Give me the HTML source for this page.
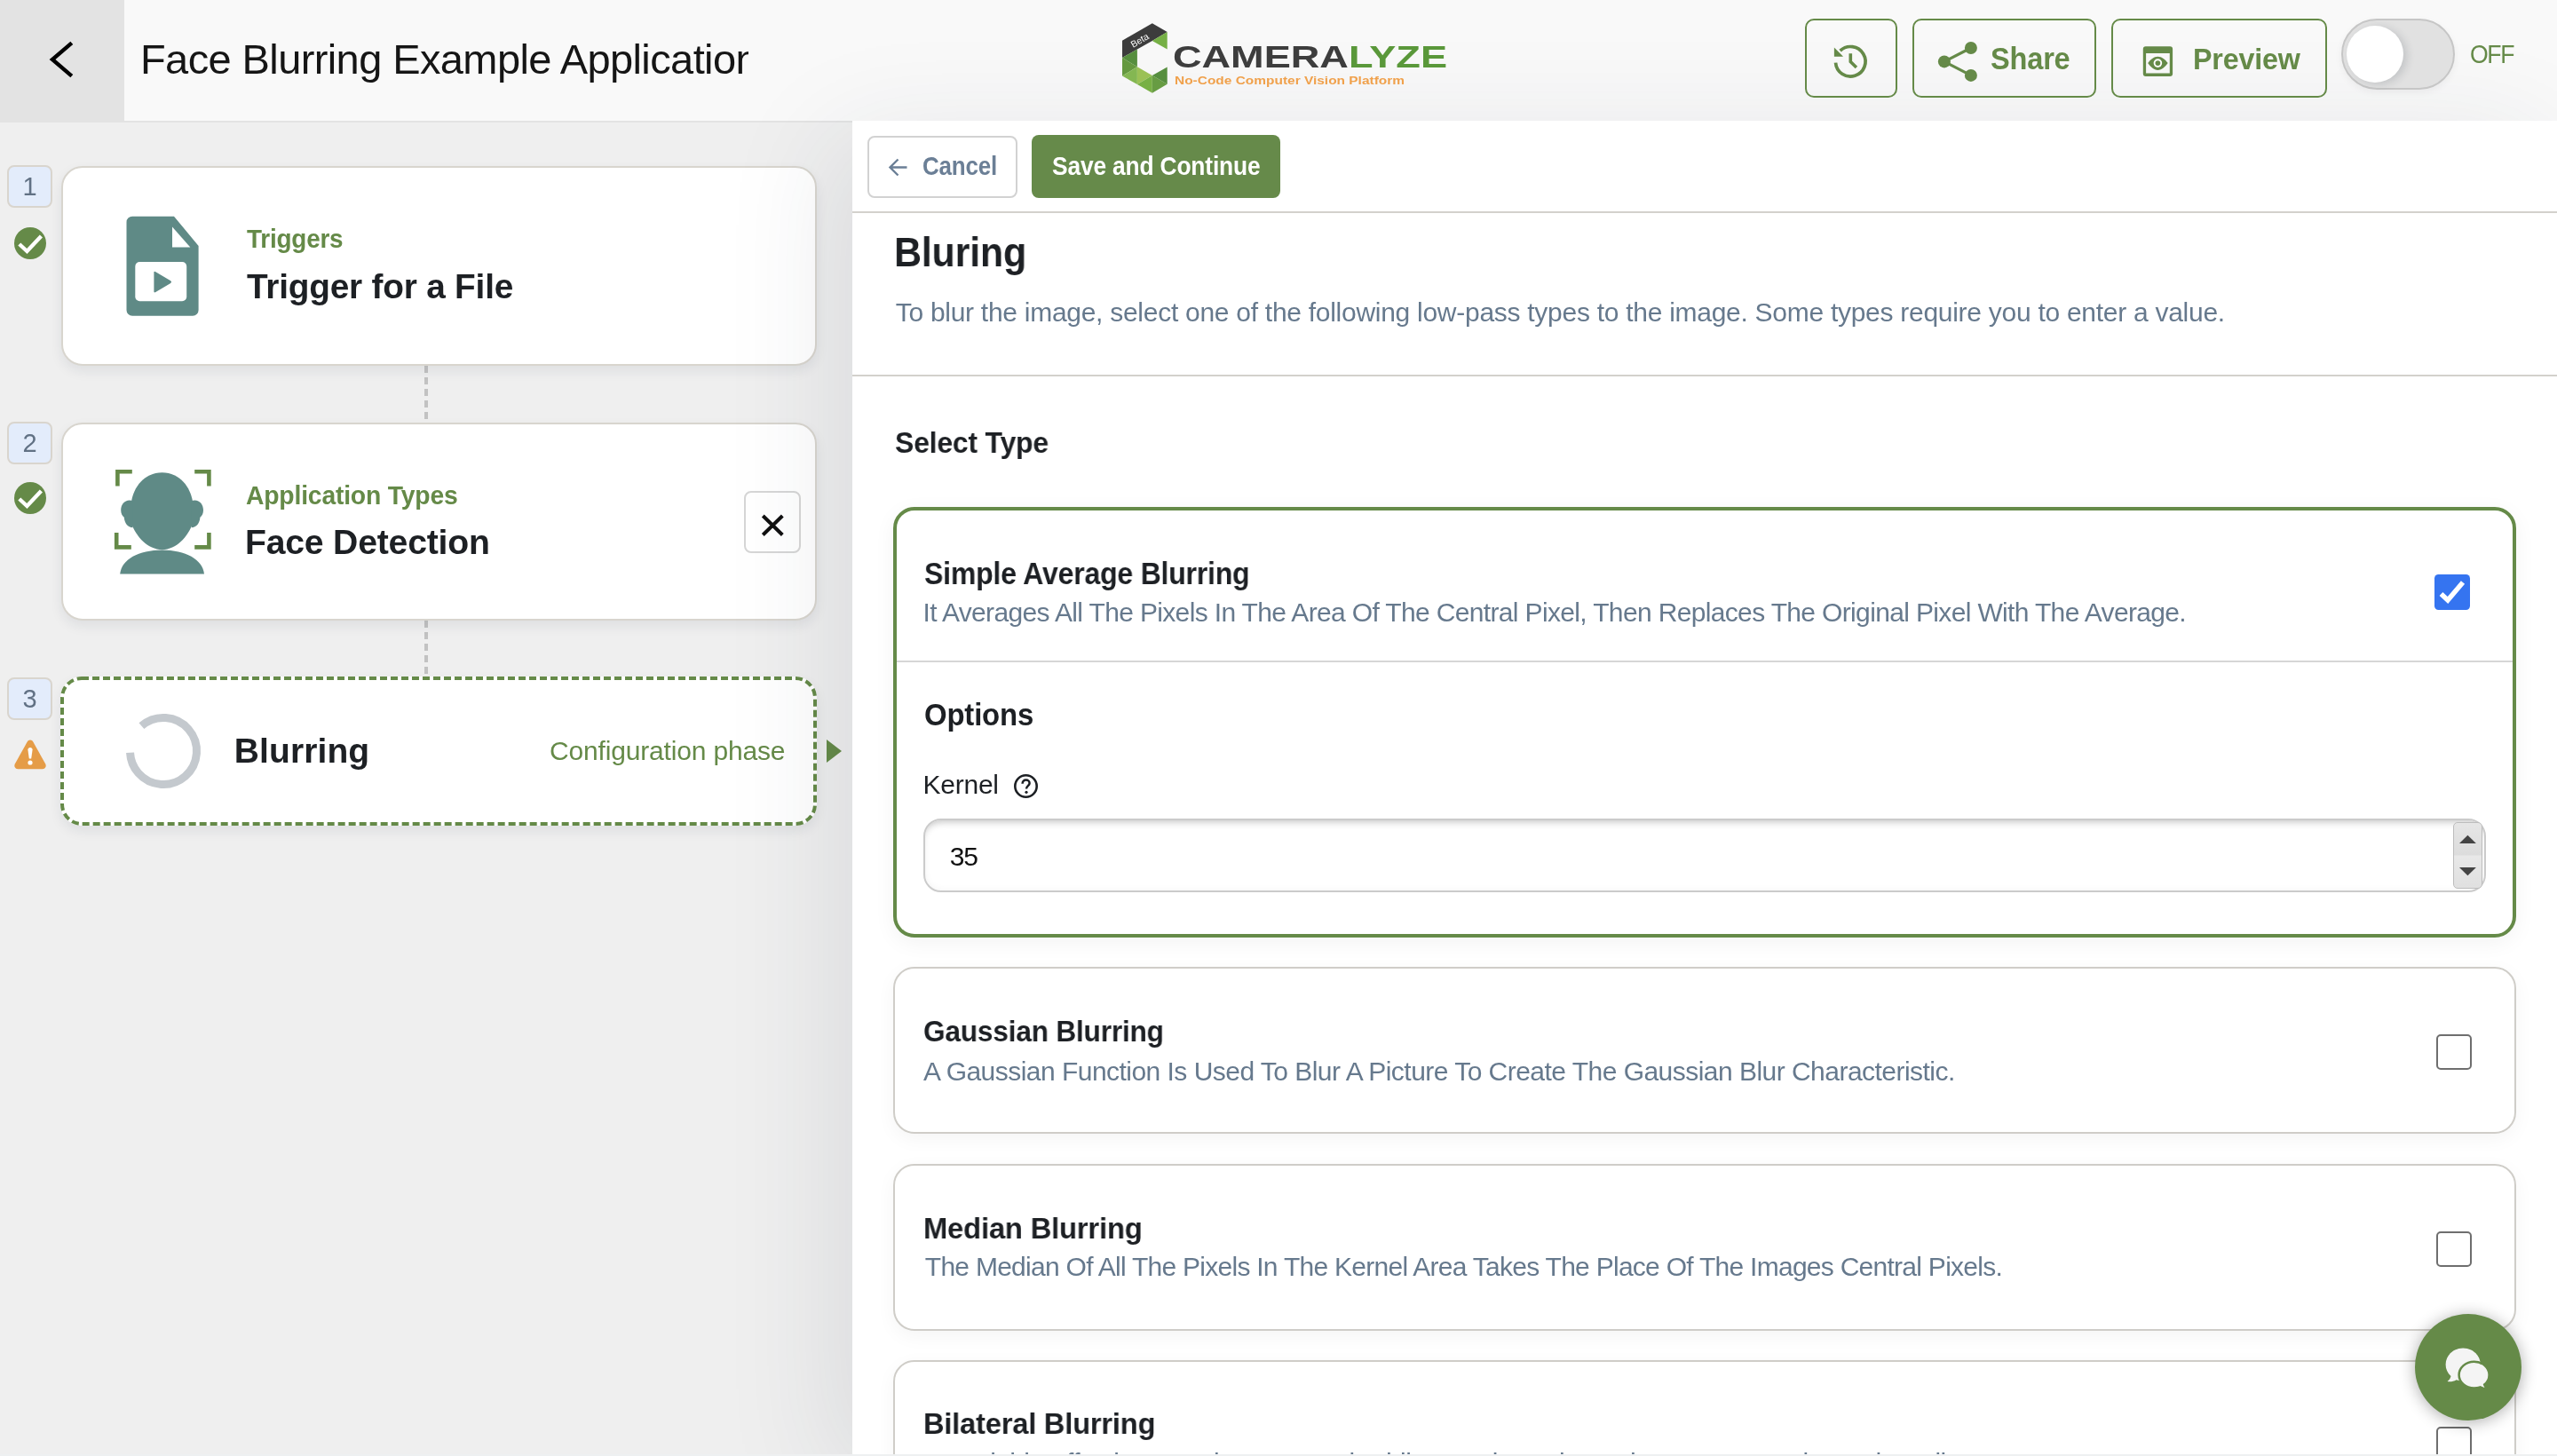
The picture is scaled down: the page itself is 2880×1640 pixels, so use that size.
<!DOCTYPE html>
<html>
<head>
<meta charset="utf-8">
<style>
html,body{margin:0;padding:0;}
@media (max-width:2000px){html{zoom:0.5;}}
body{will-change:transform;width:2880px;height:1640px;overflow:hidden;position:relative;background:#fff;font-family:"Liberation Sans",sans-serif;color:#1d2024;}
.a{position:absolute;}
.t{position:absolute;white-space:nowrap;line-height:1;}
.b{font-weight:bold;}
svg{position:absolute;overflow:visible;}
/* header */
#hdr{left:0;top:0;width:2880px;height:136px;background:#f9f9f9;}
#back{left:0;top:0;width:140px;height:137px;background:#e3e3e3;}
.hbtn{position:absolute;top:21px;height:89px;box-sizing:border-box;border:2px solid #658a48;border-radius:10px;}
/* sidebar */
#side{left:0;top:136px;width:960px;height:1504px;box-sizing:border-box;border-top:2px solid #e3e3e3;background:#efefef;}
.num{position:absolute;left:8px;width:51px;height:48px;box-sizing:border-box;border:2px solid #d9d5ce;border-radius:8px;background:#e3ecfb;color:#617184;font-size:29px;text-align:center;line-height:44px;}
.card{position:absolute;left:69px;width:851px;box-sizing:border-box;background:#fff;border:2px solid #d8d5ce;border-radius:24px;box-shadow:0 6px 14px rgba(30,40,60,0.08);}
.conn{position:absolute;left:478px;width:4px;background:repeating-linear-gradient(#c2c2c2 0 8px,transparent 8px 13px);}
/* right */
#main{left:960px;top:136px;width:1920px;height:1502px;background:#fff;box-shadow:-20px 22px 120px rgba(40,50,70,0.1);}
.line{position:absolute;height:2px;background:#d3d1cc;}
.ocard{position:absolute;left:1006px;width:1828px;box-sizing:border-box;border:2px solid #cfcdc8;border-radius:24px;background:#fff;box-shadow:0 6px 22px rgba(0,0,0,0.045);}
.cb{position:absolute;left:2744px;width:40px;height:40px;box-sizing:border-box;border:2.5px solid #6e6e6e;border-radius:5px;background:#fff;}
.desc{color:#66798d;font-size:30px;}
</style>
</head>
<body>
<div id="hdr" class="a"></div>
<div id="back" class="a"></div>

<!-- SIDEBAR -->
<div id="side" class="a"></div>
<div class="num" style="top:186px;">1</div>
<div class="num" style="top:475px;">2</div>
<div class="num" style="top:763px;">3</div>
<svg style="left:16px;top:255.5px" width="36" height="36"><circle cx="18" cy="18" r="18" fill="#658a48"/><polyline points="5.8,19 14.4,27 30.4,10" fill="none" stroke="#fff" stroke-width="4.4"/></svg>
<svg style="left:16px;top:543px" width="36" height="36"><circle cx="18" cy="18" r="18" fill="#658a48"/><polyline points="5.8,19 14.4,27 30.4,10" fill="none" stroke="#fff" stroke-width="4.4"/></svg>
<svg style="left:15px;top:832px" width="38" height="36"><path d="M19,1.5 C20.5,1.5 21.6,2.3 22.4,3.7 L36.2,28.6 C37.6,31.2 35.9,34.3 32.9,34.3 L5.1,34.3 C2.1,34.3 0.4,31.2 1.8,28.6 L15.6,3.7 C16.4,2.3 17.5,1.5 19,1.5 Z" fill="#e59c47"/><path d="M16.4,12.6 C16.4,10.9 17.6,10 19,10 C20.4,10 21.6,10.9 21.6,12.6 L20.2,22.6 L17.8,22.6 Z" fill="#fff"/><circle cx="19" cy="27" r="2.6" fill="#fff"/></svg>
<div class="conn" style="top:412px;height:64px;"></div>
<div class="conn" style="top:699px;height:64px;"></div>
<div class="card" style="top:187px;height:225px;"></div>
<svg style="left:142px;top:243px" width="82" height="113" viewBox="0 0 82 113">
  <path d="M7,0.7 L54,0.7 L81.6,34 L81.6,106 A6.5,6.5 0 0 1 75.1,112.7 L7,112.7 A6.5,6.5 0 0 1 0.5,106 L0.5,7.2 A6.5,6.5 0 0 1 7,0.7 Z" fill="#5f8a86"/>
  <polygon points="52,12.4 52,35.4 72.3,35.4" fill="#fff"/>
  <rect x="10.3" y="52" width="57.9" height="44.3" rx="5" fill="#fff"/>
  <path d="M31.4,64.6 Q30.9,62 33.3,63.2 L50.2,73.3 Q52,74.6 50.2,75.9 L33.3,86 Q30.9,87.2 31.4,84.6 Z" fill="#5f8a86"/>
</svg>
<div class="t b" id="t_trig" style="left:277.6px;top:254px;font-size:30px;color:#658a48;letter-spacing:-0.2px;transform:scaleX(0.9284);transform-origin:0 0;">Triggers</div>
<div class="t b" id="t_trigfile" style="left:277.6px;top:303px;font-size:39.5px;color:#1d2024;letter-spacing:-0.2px;transform:scaleX(0.9810);transform-origin:0 0;">Trigger for a File</div>
<div class="card" style="top:476px;height:223px;"></div>
<svg style="left:110px;top:510px" width="150" height="150" viewBox="0 0 150 150">
  <g fill="none" stroke="#658a48" stroke-width="4.6">
    <polyline points="38.8,21.2 22.4,21.2 22.4,37.6"/>
    <polyline points="109.2,21.2 125.4,21.2 125.4,37.6"/>
    <polyline points="21.2,90.1 21.2,106.4 37.8,106.4"/>
    <polyline points="125.4,90.1 125.4,106.4 109.2,106.4"/>
  </g>
  <g fill="#5f8a86">
    <path d="M72.6,22.2 C93,22.2 104.5,39 107,55 L107,80 C101,95 89,108.5 72.6,109.3 C56,108.5 44,95 38,80 L38,55 C40.5,39 52,22.2 72.6,22.2 Z"/>
    <path d="M39.5,54 C31.5,51.5 26.2,57.5 26.2,64.5 C26.2,68.5 27.6,71 29.8,72.8 C30.3,79.5 34,84.2 39.5,84.2 Z"/>
    <path d="M105.7,54 C113.7,51.5 119,57.5 119,64.5 C119,68.5 117.6,71 115.4,72.8 C114.9,79.5 111.2,84.2 105.7,84.2 Z"/>
    <path d="M25.2,136.6 C27,120 46,109.8 72.6,109.6 C99,109.8 118,120 120,136.6 Z"/>
  </g>
</svg>
<div class="t b" id="t_apptypes" style="left:277.0px;top:543px;font-size:30px;color:#658a48;letter-spacing:-0.2px;transform:scaleX(0.9438);transform-origin:0 0;">Application Types</div>
<div class="t b" id="t_facedet" style="left:276.0px;top:591px;font-size:39px;color:#1d2024;letter-spacing:-0.2px;transform:scaleX(1.0037);transform-origin:0 0;">Face Detection</div>
<div class="a" style="left:838px;top:553px;width:64px;height:70px;box-sizing:border-box;border:2px solid #d6d6d6;border-radius:8px;background:#fff;"></div>
<svg style="left:838px;top:553px" width="64" height="70"><path d="M21.3,28 L43.3,49.5 M43.3,28 L21.3,49.5" stroke="#111" stroke-width="4"/></svg>
<div class="a" style="left:68px;top:762px;width:852px;height:168px;border-radius:24px;background:#fff;box-shadow:0 6px 14px rgba(30,40,60,0.08);"></div>
<svg style="left:68px;top:762px" width="852" height="168"><rect x="2" y="2" width="848" height="164" rx="22" ry="22" fill="none" stroke="#658a48" stroke-width="4" stroke-dasharray="8 4"/></svg>
<svg style="left:142px;top:804px" width="84" height="84"><circle cx="42" cy="42" r="37.5" fill="none" stroke="#c4c9ce" stroke-width="9" stroke-dasharray="201.5 300" transform="rotate(229 42 42)"/></svg>
<div class="t b" id="t_blurring" style="left:263.8px;top:826px;font-size:39px;color:#1d2024;letter-spacing:0.1px;">Blurring</div>
<div class="t" id="t_config" style="left:619px;top:831px;font-size:30px;color:#658a48;letter-spacing:-0.17px;">Configuration phase</div>
<svg style="left:930px;top:832px" width="20" height="28"><polygon points="1,1 18,14 1,27" fill="#658a48"/></svg>


<!-- MAIN -->
<div id="main" class="a"></div>
<div class="a" style="left:976.5px;top:152.5px;width:169px;height:70px;box-sizing:border-box;border:2px solid #d2d2d2;border-radius:8px;background:#fff;"></div>
<svg style="left:990px;top:170px" width="40" height="36"><path d="M31.5,18.5 L12.5,18.5 M21.5,9.5 L12.5,18.5 L21.5,27.5" fill="none" stroke="#6b7f96" stroke-width="2.4"/></svg>
<div class="t b" id="t_cancel" style="left:1039.2px;top:172px;font-size:30px;color:#6b7f96;letter-spacing:-0.2px;transform:scaleX(0.8660);transform-origin:0 0;">Cancel</div>
<div class="a" style="left:1162px;top:152px;width:280px;height:71px;border-radius:8px;background:#668a4a;"></div>
<div class="t b" id="t_save" style="left:1185.0px;top:172px;font-size:30px;color:#fff;letter-spacing:-0.2px;transform:scaleX(0.879);transform-origin:0 0;">Save and Continue</div>
<div class="line" style="left:960px;top:238px;width:1920px;"></div>
<div class="t b" id="t_bluring" style="left:1006.8px;top:261px;font-size:46px;color:#1d2024;letter-spacing:-0.2px;transform:scaleX(0.9338);transform-origin:0 0;">Bluring</div>
<div class="t desc" id="t_desc0" style="left:1008.7px;top:337px;letter-spacing:-0.276px;">To blur the image, select one of the following low-pass types to the image. Some types require you to enter a value.</div>
<div class="line" style="left:960px;top:421.5px;width:1920px;"></div>
<div class="t b" id="t_seltype" style="left:1008.0px;top:481.8px;font-size:33.5px;color:#1d2024;letter-spacing:-0.2px;transform:scaleX(0.9528);transform-origin:0 0;">Select Type</div>

<!-- selected card -->
<div class="a" style="left:1006px;top:571px;width:1828px;height:485px;box-sizing:border-box;border:4px solid #658a48;border-radius:24px;background:#fff;box-shadow:0 6px 24px rgba(0,0,0,0.05);"></div>
<div class="t b" id="t_simple" style="left:1041.0px;top:629px;font-size:34.5px;color:#1d2024;letter-spacing:-0.2px;transform:scaleX(0.9267);transform-origin:0 0;">Simple Average Blurring</div>
<div class="t desc" id="t_desc1" style="left:1039.5px;top:675px;letter-spacing:-0.65px;">It Averages All The Pixels In The Area Of The Central Pixel, Then Replaces The Original Pixel With The Average.</div>
<svg style="left:2742px;top:647px" width="40" height="40"><rect x="0" y="0" width="40" height="40" rx="4.5" fill="#3574f0"/><polyline points="7.5,22 15,29 32,9" fill="none" stroke="#fff" stroke-width="5.5"/></svg>
<div class="a" style="left:1010px;top:744px;width:1820px;height:2px;background:#d6d6d6;"></div>
<div class="t b" id="t_options" style="left:1041.0px;top:786.5px;font-size:35px;color:#1d2024;letter-spacing:-0.2px;transform:scaleX(0.9411);transform-origin:0 0;">Options</div>
<div class="t" id="t_kernel" style="left:1039.4px;top:869px;font-size:30px;color:#1d2024;letter-spacing:-0.22px;">Kernel</div>
<svg style="left:1141px;top:871px" width="30" height="30"><circle cx="14.5" cy="14.5" r="12.2" fill="none" stroke="#1d2024" stroke-width="2.6"/><path d="M10.6,11.8 C10.6,9.2 12.4,7.6 14.6,7.6 C16.9,7.6 18.6,9.2 18.6,11.3 C18.6,14 15,14.4 15,17.4" fill="none" stroke="#1d2024" stroke-width="2.5"/><circle cx="15" cy="21.3" r="1.6" fill="#1d2024"/></svg>
<div class="a" style="left:1040px;top:922px;width:1760px;height:83px;box-sizing:border-box;border:2px solid #cbcbcb;border-radius:20px;background:#fff;box-shadow:inset 0 8px 9px -6px rgba(0,0,0,0.2),inset 0 0 9px rgba(0,0,0,0.05);"></div>
<div class="t" id="t_35" style="left:1069.7px;top:950px;font-size:30px;color:#111;letter-spacing:-1px;">35</div>
<div class="a" style="left:2762.5px;top:926px;width:33px;height:75px;box-sizing:border-box;border:1.5px solid #bdbdbd;border-radius:5px;background:linear-gradient(#e6e6e6,#dcdcdc 49%,#e8e8e8 51%,#e0e0e0);"></div>
<svg style="left:2762px;top:926px" width="34" height="75"><polygon points="8,24 17.4,14.8 26.9,24" fill="#444"/><polygon points="8,51.1 26.9,51.1 17.4,60.2" fill="#444"/></svg>

<!-- other cards -->
<div class="ocard" style="top:1089px;height:188px;"></div>
<div class="t b" id="t_gauss" style="left:1040.0px;top:1144px;font-size:34px;color:#1d2024;letter-spacing:-0.2px;transform:scaleX(0.9291);transform-origin:0 0;">Gaussian Blurring</div>
<div class="t desc" id="t_desc2" style="left:1040px;top:1192px;letter-spacing:-0.53px;">A Gaussian Function Is Used To Blur A Picture To Create The Gaussian Blur Characteristic.</div>
<div class="cb" style="top:1165px;"></div>
<div class="ocard" style="top:1310.5px;height:188px;"></div>
<div class="t b" id="t_median" style="left:1039.6px;top:1366px;font-size:34px;color:#1d2024;letter-spacing:-0.2px;transform:scaleX(0.9639);transform-origin:0 0;">Median Blurring</div>
<div class="t desc" id="t_desc3" style="left:1041.8px;top:1412px;letter-spacing:-0.73px;">The Median Of All The Pixels In The Kernel Area Takes The Place Of The Images Central Pixels.</div>
<div class="cb" style="top:1386.5px;"></div>
<div class="ocard" style="top:1532px;height:188px;"></div>
<div class="t b" id="t_bilat" style="left:1039.6px;top:1586px;font-size:34px;color:#1d2024;letter-spacing:-0.2px;transform:scaleX(0.9597);transform-origin:0 0;">Bilateral Blurring</div>
<div class="t desc" id="t_desc4" style="left:1041px;top:1632.5px;letter-spacing:-0.6px;">It Is Highly Effective In Noise Removal While Keeping Edges Sharp Compared To Other Filters.</div>
<div class="cb" style="top:1606.5px;"></div>
<div class="a" style="left:0;top:1638px;width:2880px;height:2px;background:#eef0f1;"></div>
<!-- chat -->
<div class="a" style="left:2720px;top:1480px;width:120px;height:120px;border-radius:50%;background:#658a48;box-shadow:0 2px 18px rgba(0,0,0,0.32);"></div>
<svg style="left:2720px;top:1480px" width="120" height="120">
  <path d="M54.2,38.5 C64.9,38.5 73.8,46.5 73.8,57 C73.8,67.5 64.9,75.5 54.2,75.5 C51.5,75.5 49,75 46.7,74.2 C43.5,76 40,76.6 36.5,76 C38.5,74.5 40,72.5 40.5,70 C36.7,66.6 34.6,62 34.6,57 C34.6,46.5 43.5,38.5 54.2,38.5 Z" fill="#f4f4f4"/>
  <path d="M66.6,53.8 C76,53.8 83.6,60.5 83.6,68.8 C83.6,73.2 81.5,77 78.2,79.6 C78.8,81.6 80.3,83.2 83,84.4 C79.3,84.7 76,83.8 73.6,82.4 C71.4,83.2 69,83.6 66.6,83.6 C57.2,83.6 49.6,77 49.6,68.8 C49.6,60.5 57.2,53.8 66.6,53.8 Z" fill="#f4f4f4" stroke="#658a48" stroke-width="2.5"/>
</svg>

<!-- HEADER -->
<svg style="left:0;top:0" width="140" height="137"><path d="M80.8,48.3 L59,67 L80.8,85.7" fill="none" stroke="#000" stroke-width="4.4"/></svg>
<div class="a" style="left:150px;top:20px;width:693px;height:100px;overflow:hidden;">
  <div class="t" id="t_title" style="left:8px;top:23.3px;font-size:47px;color:#151515;letter-spacing:-0.6px;">Face Blurring Example Application</div>
</div>

<!-- logo -->
<svg style="left:1255px;top:20px" width="400" height="100" viewBox="0 0 400 100">
  <polygon points="9,25.7 42.8,6.2 59.7,16 42.8,25.9 25.9,35.4 9,45.1" fill="#3c3c3c"/>
  <polygon points="42.8,25.9 59.7,16 59.7,35.6" fill="#76b046"/>
  <polygon points="9,45.1 25.9,35.4 25.9,55.3" fill="#568e3e"/>
  <polygon points="9,45.1 25.9,55.3 9,65.5" fill="#65993f"/>
  <polygon points="9,65.5 25.9,55.3 25.9,75.1" fill="#84b752"/>
  <polygon points="25.9,55.3 42.8,65 25.9,75.1" fill="#9bc155"/>
  <polygon points="25.9,75.1 42.8,65 42.8,84.7" fill="#78b044"/>
  <polygon points="42.8,65 59.7,74.8 42.8,84.7" fill="#679c43"/>
  <polygon points="42.8,65 59.7,55.6 59.7,74.8" fill="#568e3e"/>
  <text x="0" y="0" transform="translate(30.5,28.5) rotate(-30)" font-size="10.5" fill="#fff" font-family="Liberation Sans" text-anchor="middle">Beta</text>
  <text x="66" y="56" font-size="35.5" font-weight="bold" fill="#3d3d3d" font-family="Liberation Sans" textLength="309" lengthAdjust="spacingAndGlyphs">CAMERA<tspan fill="#5a983a">LYZE</tspan></text>
  <text x="68" y="75.3" font-size="13.2" font-weight="bold" fill="#f0a14c" font-family="Liberation Sans" textLength="259" lengthAdjust="spacingAndGlyphs">No-Code Computer Vision Platform</text>
</svg>
<!-- header buttons -->
<div class="hbtn" style="left:2033px;width:104px;"></div>
<svg style="left:2033px;top:21px" width="104" height="89">
  <path d="M 34.5,49.6 A 16.8,16.8 0 1 0 39.6,36.2" fill="none" stroke="#658a48" stroke-width="3.7"/>
  <polygon points="32.9,32.4 32.9,42.7 43.1,42.7" fill="#658a48"/>
  <polyline points="51.3,39.2 51.3,48.4 57.9,55" fill="none" stroke="#658a48" stroke-width="3.6"/>
</svg>
<div class="hbtn" style="left:2154px;width:207px;"></div>
<svg style="left:2154px;top:21px" width="80" height="89">
  <line x1="35.9" y1="48.4" x2="65.9" y2="33" stroke="#658a48" stroke-width="3.2"/>
  <line x1="35.9" y1="48.4" x2="65.9" y2="63.9" stroke="#658a48" stroke-width="3.2"/>
  <circle cx="65.9" cy="33" r="7" fill="#658a48"/>
  <circle cx="35.9" cy="48.4" r="7" fill="#658a48"/>
  <circle cx="65.9" cy="63.9" r="7" fill="#658a48"/>
</svg>
<div class="t b" id="t_share" style="left:2242.2px;top:48px;font-size:35px;color:#658a48;letter-spacing:-0.2px;transform:scaleX(0.9298);transform-origin:0 0;">Share</div>
<div class="hbtn" style="left:2378px;width:243px;"></div>
<svg style="left:2378px;top:21px" width="80" height="89">
  <path fill="#658a48" fill-rule="evenodd" d="M38.8,31.3 h27.3 a3,3 0 0 1 3,3 v27.7 a3,3 0 0 1 -3,3 h-27.3 a3,3 0 0 1 -3,-3 v-27.7 a3,3 0 0 1 3,-3 Z M39.1,39 v22.6 h26.7 v-22.6 Z"/>
  <path fill="#658a48" d="M41.2,50.1 C44,46 48,42.7 52.4,42.7 C56.8,42.7 60.8,46 63.7,50.1 C60.8,54.4 56.8,57.9 52.4,57.9 C48,57.9 44,54.4 41.2,50.1 Z"/>
  <circle cx="52.4" cy="50.1" r="4.8" fill="#fff"/>
  <circle cx="52.4" cy="50.1" r="2.9" fill="#658a48"/>
</svg>
<div class="t b" id="t_preview" style="left:2469.6px;top:48.8px;font-size:34px;color:#658a48;letter-spacing:-0.2px;transform:scaleX(0.9484);transform-origin:0 0;">Preview</div>
<!-- toggle -->
<div class="a" style="left:2637px;top:21px;width:128px;height:80px;box-sizing:border-box;border:2px solid #c6c6c6;border-radius:40px;background:#e1e1e1;box-shadow:0 3px 8px rgba(0,0,0,0.05);"></div>
<div class="a" style="left:2642.5px;top:28.8px;width:64px;height:64px;border-radius:50%;background:#fff;box-shadow:4px 2px 10px rgba(40,50,60,0.16);"></div>
<div class="t" id="t_off" style="left:2781.9px;top:46.0px;font-size:30px;color:#658a48;letter-spacing:-1.5px;transform:scaleX(0.887);transform-origin:0 0;">OFF</div>

</body>
</html>
